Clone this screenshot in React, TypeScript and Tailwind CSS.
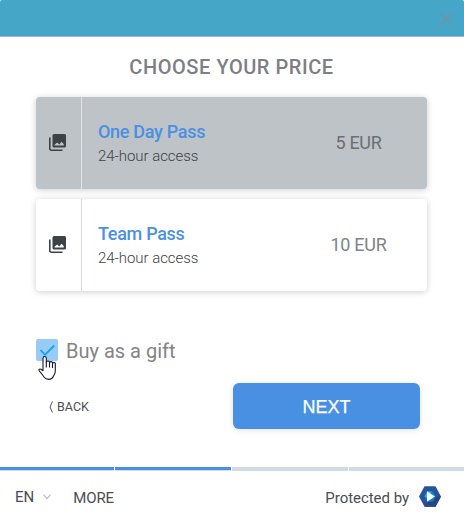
import { useState } from "react";

type Plan = {
  title: string;
  description: string;
  price: string;
};

const plans: Plan[] = [
  { title: "One Day Pass", description: "24-hour access", price: "5 EUR" },
  { title: "Team Pass", description: "24-hour access", price: "10 EUR" },
];

const PlanCard = ({ plan, selected, onSelect }: { plan: Plan; selected: boolean; onSelect: () => void }) => (
  <button
    onClick={onSelect}
    className={`flex h-[92px] w-full rounded-[4px] text-left shadow-[0_1px_6px_rgba(0,0,0,0.2)] ${selected ? "bg-[#bdc3c7]" : "bg-white"}`}
  >
    <span className={`flex h-full w-[46px] items-center justify-center border-r pr-[2px] pb-px ${selected ? "border-[#dfe3e8]" : "border-[#d3dae3]"}`}>
      <svg viewBox="0 0 17 17" className="size-[17px]">
        <path
          d="M5 0h10.500A1.500 1.500 0 0 1 17 1.500V12a1.500 1.500 0 0 1-1.500 1.500H5A1.500 1.500 0 0 1 3.500 12V1.500A1.500 1.500 0 0 1 5 0ZM5.500 11.500h9.200V10L12.500 7.800 10.300 10.500 8.200 8.400 5.500 10.800Z"
          fill="#3d4246"
          fillRule="evenodd"
        />
        <path d="M.8 3.500v11.200a1.500 1.500 0 0 0 1.500 1.500H13.500" fill="none" stroke="#3d4246" strokeWidth="1.6" />
      </svg>
    </span>
    <span className="flex flex-1 flex-col pt-[23px] pl-4">
      <span className="text-[18px] leading-6 font-medium tracking-[-0.3px] text-[#4a90e2]">{plan.title}</span>
      <span className="text-[15px] leading-6 font-light tracking-[-0.05px] text-[#3d4246]">{plan.description}</span>
    </span>
    <span
      className={`flex h-full w-[137px] items-center justify-center pb-px text-[18px] tracking-[-0.3px] ${selected ? "text-[#6b7073]" : "text-[#808387]"}`}
    >
      {plan.price}
    </span>
  </button>
);

const HandCursor = () => (
  <svg viewBox="0 0 18 24" className="pointer-events-none absolute top-[17px] left-[2px] h-6 w-[18px]">
    <path
      d="M5 15V2.200a1.600 1.600 0 0 1 3.300 0V6.500a1.600 1.600 0 0 1 3.200.3 1.500 1.500 0 0 1 3 .7 1.400 1.400 0 0 1 2.800 1V15c0 3-1.300 3.500-1.800 5-.8 2.300-2.500 3.400-5 3.400-2.200 0-3.700-1-4.700-2.600L3 16.800C1.800 15.500.4 14.500 1 13.500c.9-1.200 2.800-.2 4 1.500"
      fill="#fff"
      stroke="#15172b"
      strokeWidth="1.1"
      strokeLinejoin="round"
    />
    <path d="M8.300 6.500v5M11.500 7v4.500M14.500 7.500v4.500" stroke="#15172b" strokeWidth="1.1" />
  </svg>
);

const Logo = () => (
  <svg viewBox="0 0 22 21" className="h-[21px] w-[22px]">
    <path d="M5.500.3h11L22 10.500 16.500 20.700h-11L0 10.500Z" fill="#2a5298" />
    <path d="M22 10.500 16.500 20.700h-11L8 15.500h6l2.500-5Z" fill="#2a4682" />
    <path d="M8 5.500h6l2.500 5-2.500 5H8l-2.500-5Z" fill="#0b82cc" />
    <path d="M8 5.500h5L8 12 5.500 10.500Z" fill="#16b8ef" />
    <path d="m8 5.300 8 5.200-8 5.200Z" fill="#fff" />
  </svg>
);

const steps = [true, true, false, false];

const App = () => {
  const [selected, setSelected] = useState(0);
  const [gift, setGift] = useState(true);

  return (
    <div className="flex h-[524px] w-[464px] flex-col bg-white font-[Roboto,sans-serif]">
      <header className="flex h-[37px] items-center justify-end rounded-t-[2px] border-b border-[#9fb9cf] bg-[#45a6c8] pt-px pr-[11px]">
        <button aria-label="Close">
          <svg viewBox="0 0 14 14" className="size-[14px]" fill="none" stroke="#7f8f94" strokeWidth="1.1">
            <path d="M0.5 0.5 L13.5 13.5" />
            <path d="M13.5 0.5 L0.5 13.5" />
          </svg>
        </button>
      </header>

      <main className="flex flex-1 flex-col pr-[37px] pl-9">
        <h1 className="mt-4 text-center text-[20px] leading-7 font-medium tracking-[0.55px] text-[#7c8084]">CHOOSE YOUR PRICE</h1>
        <div className="mt-4 flex flex-col gap-[10px]">
          {plans.map((plan, i) => (
            <PlanCard key={plan.title} plan={plan} selected={i === selected} onSelect={() => setSelected(i)} />
          ))}
        </div>

        <div className="mt-12 flex h-[22px] items-center gap-2">
          <div className="relative size-[22px]">
            <button
              role="checkbox"
              aria-checked={gift}
              aria-label="Buy as a gift"
              onClick={() => setGift(!gift)}
              className="flex size-[22px] items-center justify-center rounded-[2px] bg-[#98cbf8]"
            >
              {gift && (
                <svg viewBox="0 0 22 22" className="size-[22px]" fill="none" stroke="#0ca5ea" strokeWidth="1.8">
                  <path d="m4.500 11 4.500 4.800 9.300-9.300" />
                </svg>
              )}
            </button>
            <HandCursor />
          </div>
          <span className="pt-[2px] text-[20px] text-[#848484]">Buy as a gift</span>
        </div>

        <div className="mt-[22px] flex items-center justify-between pr-[7px] pl-[13px]">
          <button className="flex items-center gap-[4px] pt-[2px] text-[12.5px] text-[#4a4e52]">
            <svg viewBox="0 0 4 12" className="h-3 w-1" fill="none" stroke="#4a4e52" strokeWidth="1">
              <path d="M3.500.500Q2.500 2.500 1 6Q2.500 9.500 3.500 11.500" />
            </svg>
            BACK
          </button>
          <button className="h-[46px] w-[187px] rounded-[6px] bg-[#4a90e2] pt-[2px] font-['Liberation_Sans',Arial,sans-serif] text-[18px] text-white shadow-[0_1px_6px_rgba(0,0,0,0.12)] [-webkit-text-stroke:0.25px_white]">
            NEXT
          </button>
        </div>
      </main>

      <div className="grid h-1 grid-cols-[114px_116px_116px_115px] gap-px">
        {steps.map((done, i) => (
          <div key={i} className={`border-b border-[#d3dae5] ${done ? "bg-[#4a90e2]" : "bg-[#d3dae5]"}`} />
        ))}
      </div>
      <footer className="flex h-[53px] items-center pr-[23px] pl-[15px] text-[15px] text-[#4a4e52]">
        <button className="flex items-center gap-[9px] pb-px">
          EN
          <svg viewBox="0 0 8 6" className="h-[6px] w-2" fill="none" stroke="#b5bcc9" strokeWidth="1.2">
            <path d="M0.5 0.7 4 4.7 7.5 0.7" />
          </svg>
        </button>
        <button className="ml-[22px] pt-px tracking-[-0.1px]">MORE</button>
        <span className="mr-[10px] ml-auto pt-px tracking-[-0.04px]">Protected by</span>
        <span className="flex pb-[2px]">
          <Logo />
        </span>
      </footer>
    </div>
  );
};

export default App;
